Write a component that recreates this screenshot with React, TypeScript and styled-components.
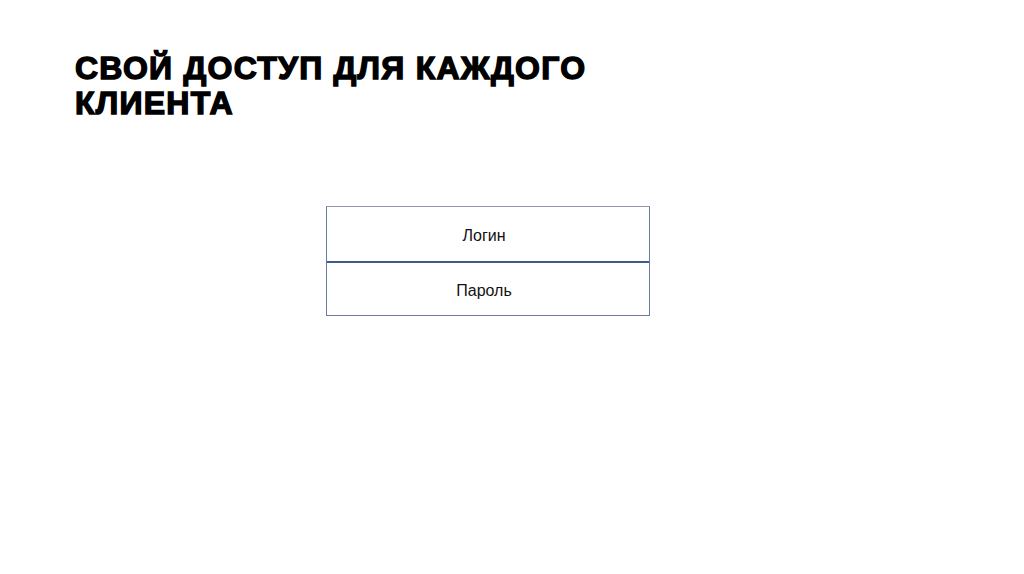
import React from 'react'
import styled, { createGlobalStyle } from 'styled-components'

const GlobalStyle = createGlobalStyle`
  html, body {
    margin: 0;
    padding: 0;
    background: #ffffff;
  }
  body {
    font-family: 'Liberation Sans', Arial, sans-serif;
  }
`

const Slide = styled.div`
  width: 1024px;
  height: 574px;
  box-sizing: border-box;
  padding: 51px 0 0 75px;
  display: flex;
  flex-direction: column;
`

const Title = styled.h1`
  margin: 0;
  font-family: 'Liberation Sans', Arial, sans-serif;
  font-weight: 700;
  font-size: 32px;
  line-height: 35px;
  color: #000000;
  letter-spacing: 1.25px;
  -webkit-text-stroke: 1.4px #000000;
  text-transform: uppercase;
`

const Form = styled.div`
  margin: 85px 0 0 251px;
  width: 322px;
  display: flex;
  flex-direction: column;
  border: 1px solid #6b7aa6;
  border-top-color: #8f98ab;
`

const Field = styled.div<{ $divider?: boolean }>`
  height: 54px;
  display: flex;
  align-items: center;
  justify-content: center;
  font-size: 16px;
  color: #111111;
  border-top: ${({ $divider }) => ($divider ? '2px solid #41598c' : 'none')};
  box-sizing: border-box;
  padding: 4px 8px 0 0;
`

const App = () => {
  return (
    <>
      <GlobalStyle />
      <Slide>
        <Title>
          Свой доступ для каждого
          <br />
          клиента
        </Title>
        <Form>
          <Field>Логин</Field>
          <Field $divider>Пароль</Field>
        </Form>
      </Slide>
    </>
  )
}

export default App
